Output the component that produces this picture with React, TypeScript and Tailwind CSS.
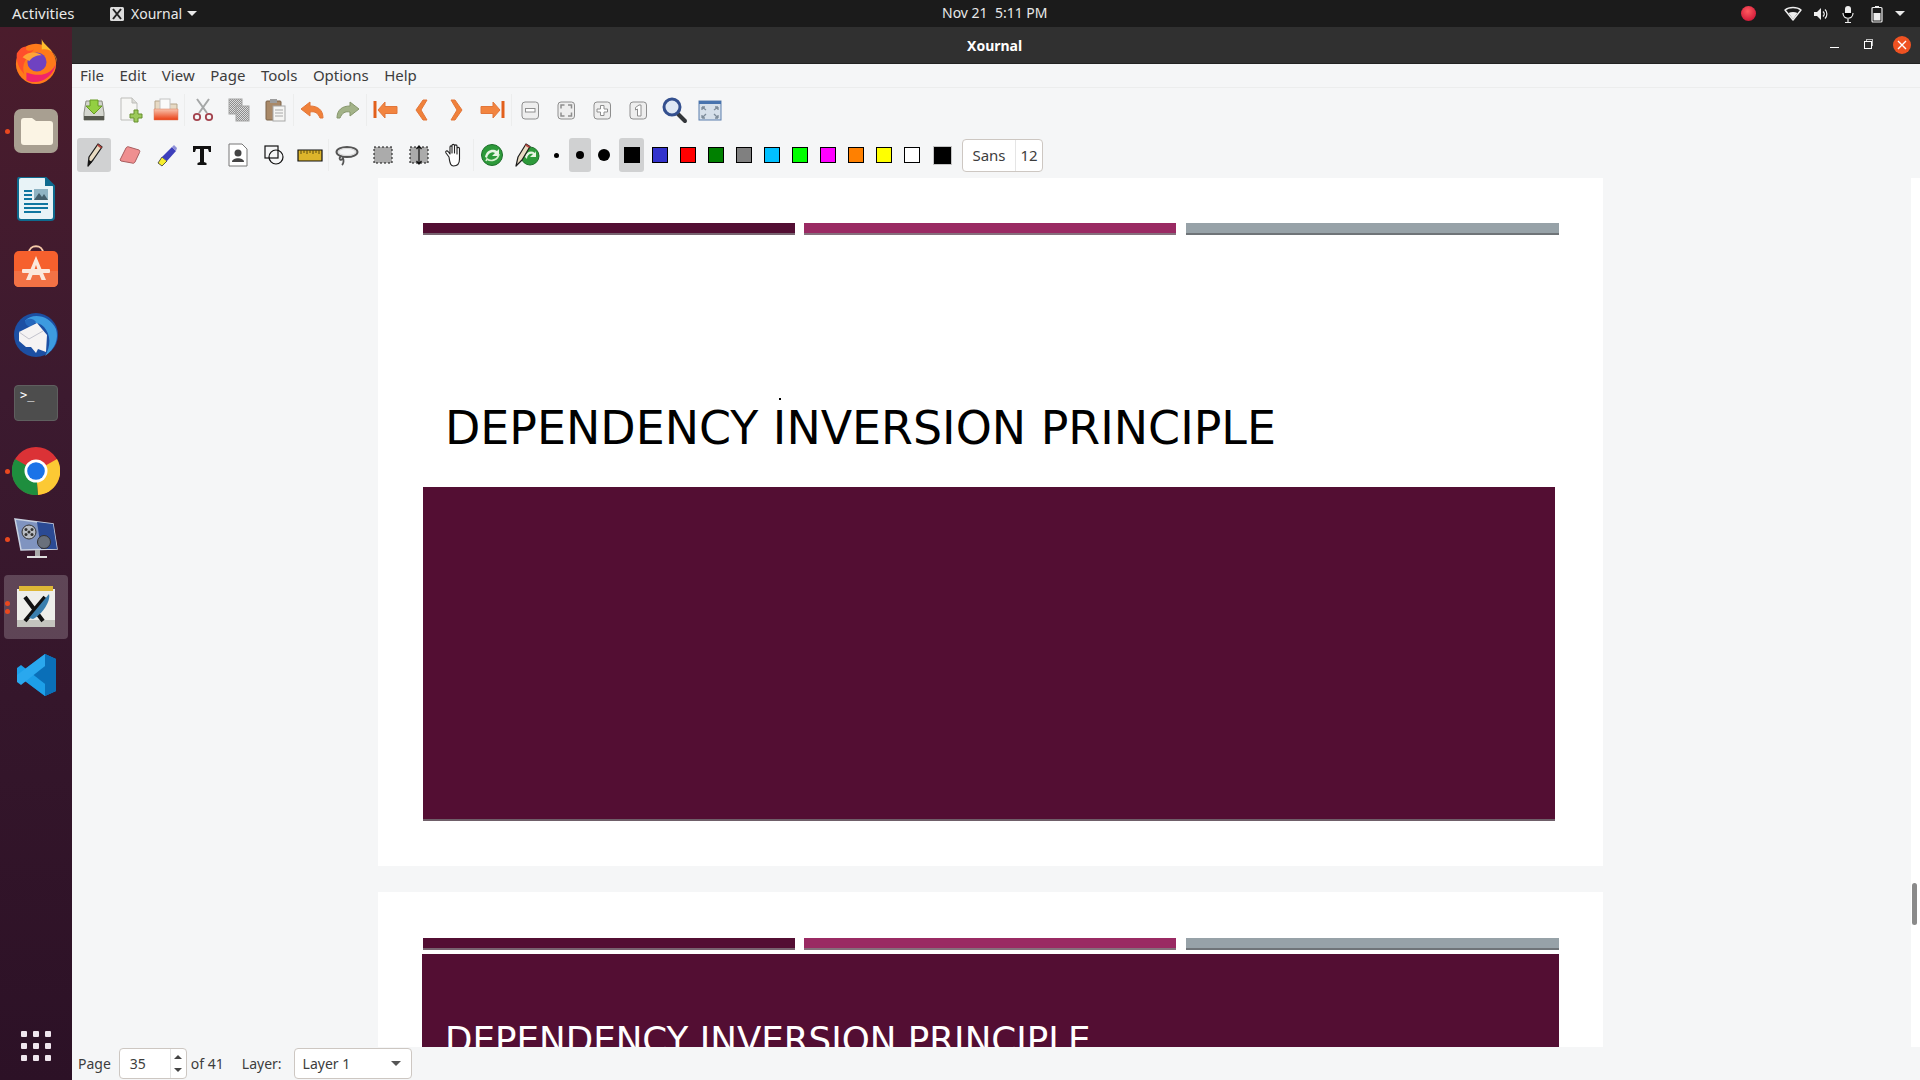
import type { ReactNode } from "react";

const ui = "font-['Noto_Sans','Open_Sans',sans-serif]";

function Icon({ children, size = 28 }: { children: ReactNode; size?: number }) {
  return (
    <svg width={size} height={size} viewBox="0 0 28 28" fill="none">
      {children}
    </svg>
  );
}

function Slot({ children, active, thin }: { children: ReactNode; active?: boolean; thin?: boolean }) {
  return (
    <div className={`h-[34px] flex items-center justify-center shrink-0 ${thin ? "w-[35px]" : "w-9"}`}>
      <div className={`w-[34px] h-[34px] flex items-center justify-center rounded-[3px] ${active ? "bg-[#d0d1d2]" : ""}`}>
        {children}
      </div>
    </div>
  );
}

function Sep() {
  return <div className="w-px h-8 bg-[#eceded] shrink-0" />;
}

// first toolbar
const saveIcon = (
  <Icon>
    <path d="M4 17 L6 5 H22 L24 17 V24 H4 Z" fill="#d4d6cf" stroke="#8a8c82" />
    <rect x="4" y="20" width="20" height="4" fill="#55574f" />
    <path d="M10 4 H18 V10 H22 L14 18 L6 10 H10 Z" fill="#93cf42" stroke="#669a22" />
  </Icon>
);
const newIcon = (
  <Icon>
    <path d="M5 2 H16 L21 7 V24 H5 Z" fill="#f7f7f5" stroke="#bdbdb9" />
    <path d="M16 2 V7 H21" fill="#dcdcd8" stroke="#bdbdb9" />
    <path d="M18 14 H22 V18 H26 V22 H22 V26 H18 V22 H14 V18 H18 Z" fill="#9cc95a" stroke="#668f2e" />
  </Icon>
);
const openIcon = (
  <Icon>
    <defs>
      <linearGradient id="fold" x1="0" y1="0" x2="0" y2="1">
        <stop offset="0" stopColor="#f8c4ae" />
        <stop offset="1" stopColor="#ea3d12" />
      </linearGradient>
    </defs>
    <path d="M3 5 H10 L12 8 H25 V14 H3 Z" fill="#e6d9c4" stroke="#b5a58a" />
    <rect x="8" y="3" width="10" height="11" fill="#fafafa" stroke="#c4c4c4" />
    <path d="M2 13 H26 V24 H2 Z" fill="url(#fold)" stroke="#d9785a" strokeWidth="0.5" />
  </Icon>
);
const cutIcon = (
  <Icon>
    <path d="M8 3 L18 17 M20 3 L10 17" stroke="#a5a7a7" strokeWidth="2" />
    <circle cx="8" cy="21" r="3.2" stroke="#a3434e" strokeWidth="1.8" />
    <circle cx="20" cy="21" r="3.2" stroke="#a3434e" strokeWidth="1.8" />
  </Icon>
);
const copyIcon = (
  <Icon>
    <defs>
      <pattern id="chk" width="2" height="2" patternUnits="userSpaceOnUse">
        <rect width="2" height="2" fill="#dcdcdc" />
        <rect width="1" height="1" fill="#8c8c8c" />
        <rect x="1" y="1" width="1" height="1" fill="#8c8c8c" />
      </pattern>
    </defs>
    <rect x="4" y="3" width="13" height="15" fill="url(#chk)" stroke="#a5a5a5" />
    <rect x="11" y="10" width="13" height="15" fill="url(#chk)" stroke="#a5a5a5" />
  </Icon>
);
const pasteIcon = (
  <Icon>
    <rect x="5" y="5" width="15" height="19" rx="1" fill="#a98968" stroke="#7b6248" />
    <rect x="9" y="3" width="7" height="4" fill="#9d9d9d" />
    <rect x="12" y="10" width="12" height="15" fill="#f5f5f3" stroke="#a8a8a8" />
    <path d="M14 14 H22 M14 17 H22 M14 20 H22" stroke="#a8a8a8" />
  </Icon>
);
const undoIcon = (
  <Icon>
    <path d="M12 6 L3 13 L12 20 V16 C17 15 20 17 22 22 H25 C25 14 20 10 12 10 Z" fill="#f0813a" stroke="#e2763a" strokeLinejoin="round" />
  </Icon>
);
const redoIcon = (
  <Icon>
    <path d="M16 6 L25 13 L16 20 V16 C11 15 8 17 6 22 H3 C3 14 8 10 16 10 Z" fill="#a3b389" stroke="#86966c" strokeLinejoin="round" />
  </Icon>
);
const firstIcon = (
  <Icon>
    <path d="M4 5 V22" stroke="#e2601c" strokeWidth="3" />
    <path d="M7 14 L14 6 V10.5 H26 V17.5 H14 V22 Z" fill="#f2843f" stroke="#e2763a" strokeLinejoin="round" />
  </Icon>
);
const prevIcon = (
  <Icon>
    <path d="M16 4 L9 14 L16 24 H20 L14 14 L20 4 Z" fill="#f0813a" stroke="#e2763a" strokeLinejoin="round" />
  </Icon>
);
const nextIcon = (
  <Icon>
    <path d="M12 4 L19 14 L12 24 H8 L14 14 L8 4 Z" fill="#f0813a" stroke="#e2763a" strokeLinejoin="round" />
  </Icon>
);
const lastIcon = (
  <Icon>
    <path d="M24 5 V22" stroke="#e2601c" strokeWidth="3" />
    <path d="M21 14 L14 6 V10.5 H2 V17.5 H14 V22 Z" fill="#f2843f" stroke="#e2763a" strokeLinejoin="round" />
  </Icon>
);

function ZoomKey({ children }: { children: ReactNode }) {
  return (
    <Icon>
      <rect x="6" y="6" width="16.5" height="17" rx="3" fill="#eeeeee" stroke="#8e8e8e" />
      {children}
    </Icon>
  );
}

const zoomOut = (
  <ZoomKey>
    <rect x="9.5" y="12.5" width="9.5" height="3.5" fill="#fff" stroke="#8e8e8e" />
  </ZoomKey>
);
const zoomFit = (
  <ZoomKey>
    <path d="M9 12.5 V9 H12.5 M16 9 H19.5 V12.5 M19.5 16.5 V20 H16 M12.5 20 H9 V16.5" stroke="#8e8e8e" strokeWidth="1.5" />
  </ZoomKey>
);
const zoomIn = (
  <ZoomKey>
    <path d="M12.5 9.5 H16 V13 H19.5 V16 H16 V19.5 H12.5 V16 H9 V13 H12.5 Z" fill="#fff" stroke="#8e8e8e" />
  </ZoomKey>
);
const zoomOne = (
  <ZoomKey>
    <path d="M11.5 11.5 L15 9 H17 V20 H13.5 V13 L11.5 14 Z" fill="#fff" stroke="#8e8e8e" />
  </ZoomKey>
);
const searchIcon = (
  <Icon>
    <path d="M17 17 L25 25" stroke="#33363a" strokeWidth="4" strokeLinecap="round" />
    <circle cx="12" cy="11" r="8" fill="#dfe8f4" stroke="#34508f" strokeWidth="3" />
  </Icon>
);
const fullscreenIcon = (
  <Icon>
    <rect x="3" y="5" width="22" height="19" fill="#d6e0ea" stroke="#5c7fae" />
    <rect x="3" y="5" width="22" height="3" fill="#4773ae" />
    <path d="M6 11 L10 14 M6 11 H9 M6 11 V14 M22 11 L18 14 M22 11 H19 M22 11 V14 M6 22 L10 18 M6 22 H9 M6 22 V19 M22 22 L18 18 M22 22 H19 M22 22 V19" stroke="#7d8c9a" strokeWidth="1.3" />
  </Icon>
);

// second toolbar
const penIcon = (
  <Icon>
    <path d="M8 25 L9 16 L18 3 L22 6 L13 19 Z" fill="#e9dcc3" stroke="#1c1c1c" strokeWidth="1.3" strokeLinejoin="round" />
    <path d="M17 4.5 L18 3 L22 6 L21 7.5 Z" fill="#b5463f" />
    <path d="M8 25 L9 19 L12 21 Z" fill="#111" />
  </Icon>
);
const eraserIcon = (
  <Icon>
    <path d="M4 19 L10 7 C11 5.5 12 5.5 13 6 L23 9 C24 9.5 24 10.5 23.5 11.5 L19 21 C18 22.5 17 22.5 16 22 L5 20 Z" fill="#ef8f90" stroke="#a85d5f" strokeLinejoin="round" />
  </Icon>
);
const highlighterIcon = (
  <Icon>
    <path d="M6 22 L10 16 L15 20 L10 25 Z" fill="#f6ee2d" stroke="#333" strokeWidth="0.8" />
    <path d="M10 16 L20 6 L24 10 L15 20 Z" fill="#3d3fbb" />
    <path d="M20 6 L22 4 L25 7 L24 10 Z" fill="#8d8fd8" />
  </Icon>
);
const textIcon = (
  <Icon>
    <path d="M5 5 H23 V11 H21 L20 8 H16 V21 L18.5 22 V24 H9.5 V22 L12 21 V8 H8 L7 11 H5 Z" fill="#111" />
  </Icon>
);
const imageIcon = (
  <Icon>
    <path d="M5 3 H18 L23 8 V25 H5 Z" fill="#fff" stroke="#777" strokeLinejoin="round" />
    <circle cx="14" cy="12" r="3.5" fill="#444" />
    <path d="M8 21 C8 16 20 16 20 21 Z" fill="#444" />
  </Icon>
);
const shapesIcon = (
  <Icon>
    <rect x="5" y="5" width="13" height="12" stroke="#111" strokeWidth="1.2" />
    <circle cx="16" cy="16" r="7" stroke="#111" strokeWidth="1.2" />
  </Icon>
);
const rulerIcon = (
  <Icon>
    <path d="M2 9 H26 V20 H2 Z" fill="#dcb42b" stroke="#111" strokeWidth="1.2" />
    <path d="M5 9 V13 M8 9 V12 M11 9 V13 M14 9 V12 M17 9 V13 M20 9 V12 M23 9 V13" stroke="#5a4a12" />
  </Icon>
);
const lassoIcon = (
  <Icon>
    <ellipse cx="14" cy="11" rx="10.5" ry="5" stroke="#555" strokeWidth="2" />
    <ellipse cx="14" cy="11" rx="8.5" ry="3.5" stroke="#d5d5d5" />
    <path d="M8 15 C5 18 8 21 10 17 C11 20 10 23 9 24" stroke="#555" strokeWidth="1.8" />
  </Icon>
);
const selectRectIcon = (
  <Icon>
    <rect x="5" y="6" width="18" height="16" fill="#ababab" stroke="#111" strokeDasharray="2 2" />
  </Icon>
);
const vspaceIcon = (
  <Icon>
    <rect x="5" y="6" width="18" height="16" fill="#ababab" stroke="#111" strokeDasharray="2 2" />
    <path d="M14 5 V23 M11.5 8 L14 5 L16.5 8 M11.5 20 L14 23 L16.5 20" stroke="#111" strokeWidth="1.2" />
  </Icon>
);
const handIcon = (
  <Icon>
    <path d="M8 16 L5 12 C4 10 6 9 7.5 11 L9 13 V6 C9 4.5 11 4.5 11 6 V12 V4.5 C11 3 13.5 3 13.5 4.5 V12 V5 C13.5 3.5 16 3.5 16 5 V13 V7.5 C16 6 18.5 6 18.5 7.5 V18 C18.5 23 15.5 25 12.5 25 C10 25 9 23.5 8 16 Z" fill="#fff" stroke="#222" strokeWidth="1.1" strokeLinejoin="round" />
  </Icon>
);
const refreshGreen = (
  <Icon>
    <circle cx="14" cy="14" r="10.5" fill="#2d9a3a" stroke="#1e6f2b" />
    <path d="M7 16 C8 9 15 7 19 10 L21 8 V15 H14 L17 12 C14 10 10 12 9 17 Z" fill="#e8f5e4" />
    <path d="M21 13 C20 19 13 21 9 18 L8 20" stroke="#d7efd0" strokeWidth="1.6" />
  </Icon>
);
const penRefresh = (
  <Icon>
    <circle cx="17" cy="15" r="9" fill="#2d9a3a" stroke="#1e6f2b" />
    <path d="M12 16 C13 11 18 9 22 12 L23 10 V16 H17 L20 13 C17 12 14 14 14 18 Z" fill="#e8f5e4" />
    <path d="M3 25 L5 16 L13 3 L17 5.5 L9 19 Z" fill="#e9dcc3" stroke="#1c1c1c" strokeWidth="1.2" strokeLinejoin="round" />
    <path d="M12 4.5 L13 3 L17 5.5 L16 7 Z" fill="#b5463f" />
  </Icon>
);

const colours = ["bg-[#3333cc]", "bg-[#ff0000]", "bg-[#008000]", "bg-[#808080]", "bg-[#00c0ff]", "bg-[#00ff00]", "bg-[#ff00ff]", "bg-[#ff8000]", "bg-[#ffff00]", "bg-white"];

function Caret({ className }: { className?: string }) {
  return <div className={`w-0 h-0 border-x-[5px] border-x-transparent border-t-[5px] border-t-[#e9e9e9] ${className ?? ""}`} />;
}

function TopBar() {
  return (
    <div className="h-[27px] bg-[#1b1b1b] text-[#e9e9e9] text-[14px] flex items-center relative shrink-0">
      <span className="ml-3 w-[98px] text-[15px]">Activities</span>
      <svg width="14" height="14" viewBox="0 0 14 14">
        <rect width="14" height="14" rx="1.5" fill="#dddddd" />
        <path d="M3 2 L11 12 M11 2 L3 12" stroke="#222" strokeWidth="2" />
      </svg>
      <span className="ml-[7px]">Xournal</span>
      <Caret className="ml-[5px]" />
      <span className="absolute left-[942px] top-[2px] text-[14px]">Nov 21&nbsp;&nbsp;5:11 PM</span>
      <div className="ml-auto flex items-center">
        <div className="w-[15px] h-[15px] rounded-full bg-[radial-gradient(circle_at_45%_35%,#ff5a5f,#d61f3c_70%,#a01030)]" />
        <svg width="20" height="20" viewBox="0 0 20 20" className="ml-[27px]">
          <path d="M2 6 C6 2.5 14 2.5 18 6 L10 16 Z" fill="#1b1b1b" stroke="#eee" strokeWidth="1.5" strokeLinejoin="round" />
          <path d="M5.5 9 C8 7.5 12 7.5 14.5 9 L10 15 Z" fill="#eee" />
        </svg>
        <svg width="18" height="18" viewBox="0 0 18 18" className="ml-[9px]">
          <path d="M2 7 H5 L9 3 V15 L5 11 H2 Z" fill="#eee" />
          <path d="M11 6.5 C12.5 8 12.5 10 11 11.5 M13 4.5 C15.5 7 15.5 11 13 13.5" stroke="#eee" strokeWidth="1.2" />
        </svg>
        <svg width="16" height="20" viewBox="0 0 16 20" className="ml-[10px]">
          <rect x="5" y="2" width="6" height="11" rx="3" fill="#eee" />
          <path d="M3 9 C3 16 13 16 13 9 M8 15 V18 M5 18.5 H11" stroke="#eee" strokeWidth="1.2" />
        </svg>
        <svg width="12" height="18" viewBox="0 0 12 18" className="ml-[15px]">
          <rect x="4" y="1" width="4" height="2" fill="#eee" />
          <rect x="1" y="2.5" width="10" height="14.5" rx="1" fill="none" stroke="#eee" strokeWidth="1.2" />
          <rect x="2.5" y="8" width="7" height="7.5" fill="#eee" />
        </svg>
        <Caret className="ml-[12px] mr-[15px]" />
      </div>
    </div>
  );
}

function DockItem({ children, dots = 0, active }: { children: ReactNode; dots?: number; active?: boolean }) {
  return (
    <div className="relative h-[68px] flex items-center justify-center">
      {active && <div className="absolute left-1 right-1 top-[2px] bottom-[2px] rounded-[4px] bg-white/20" />}
      <div className="absolute left-[5px] flex flex-col gap-[3px]">
        {Array.from({ length: dots }).map((_, i) => (
          <div key={i} className="w-[5px] h-[5px] rounded-full bg-[#e9481f]" />
        ))}
      </div>
      <div className="relative">{children}</div>
    </div>
  );
}

function Dock() {
  return (
    <div className="w-[72px] shrink-0 flex flex-col bg-[linear-gradient(180deg,#4b1c2c_0%,#3c1a2f_35%,#2c1126_100%)]">
      <div className="mb-[2px]">
        <DockItem>
          <svg width="46" height="48" viewBox="0 0 48 48">
            <circle cx="24" cy="27" r="21" fill="#ff7a1a" />
            <path d="M30 1 C32 8 44 12 46 26 C46 16 38 10 30 12 Z" fill="#ffbd2e" />
            <path d="M4 16 C8 10 12 8 14 10 C12 14 18 14 22 12 C14 20 8 28 12 38 C6 32 3 24 4 16 Z" fill="#ff4f2b" />
            <circle cx="25" cy="25" r="10" fill="#6f42c1" />
            <path d="M10 20 C16 14 24 14 30 18 C24 18 20 20 17 24 Z" fill="#ffa436" />
            <path d="M14 44 C26 50 42 42 45 26 C42 36 30 42 14 36 Z" fill="#f0246b" />
          </svg>
        </DockItem>
      </div>
      <DockItem dots={1}>
        <div className="w-11 h-11 rounded-[7px] bg-[#a89f91] flex items-center justify-center">
          <svg width="33" height="28" viewBox="0 0 33 28">
            <path d="M1 4 C1 2 2 1 4 1 H12 L16 4 H30 C32 4 33 5 33 7 V25 C33 27 32 28 30 28 H4 C2 28 1 27 1 25 Z" fill="#fbf4e4" />
          </svg>
        </div>
      </DockItem>
      <DockItem>
        <svg width="38" height="44" viewBox="0 0 38 44">
          <path d="M1 3 C1 1 2 0 4 0 H28 L37 9 V40 C37 42 36 43 34 43 H4 C2 43 1 42 1 40 Z" fill="#e8f3f7" stroke="#0e6a8e" strokeWidth="2" />
          <path d="M28 0 L37 9 H28 Z" fill="#0e6a8e" />
          <path d="M7 14 H15 M7 18 H15 M7 22 H15 M7 27 H31 M7 31 H31 M7 35 H24" stroke="#0e76a0" strokeWidth="2" />
          <rect x="17" y="12" width="14" height="11" fill="#8fb4c4" />
          <path d="M17 23 L22 16 L25 20 L27 17 L31 23 Z" fill="#44606d" />
        </svg>
      </DockItem>
      <DockItem>
        <svg width="44" height="44" viewBox="0 0 44 44">
          <path d="M15 8 C15 -1 29 -1 29 8" stroke="#f6c9a8" strokeWidth="2" fill="none" />
          <rect x="0" y="6" width="44" height="36" rx="5" fill="#f6602d" />
          <path d="M0 26 H44 V37 C44 40 42 42 39 42 H5 C2 42 0 40 0 37 Z" fill="#f27245" />
          <path d="M22 11 L32 35 H27.5 L25.5 30 H18.5 L16.5 35 H12 L22 11 Z M22 20 L20 26 H24 Z" fill="#fbe8dc" fillRule="evenodd" />
          <rect x="8" y="24" width="28" height="4" rx="1" fill="#fbe8dc" />
        </svg>
      </DockItem>
      <DockItem>
        <svg width="48" height="48" viewBox="0 0 48 48">
          <circle cx="24" cy="24" r="22" fill="#1c4fa3" />
          <path d="M13 10 C20 1 38 4 44 18 C47 28 43 38 33 45 C39 35 39 24 32 16 C26 10 18 12 13 10 Z" fill="#3d9be0" />
          <path d="M13 10 C16 7 21 7 24 11 L18 16 C15 15 13 13 13 10 Z" fill="#2568bd" />
          <path d="M7 21 L25 12 L35 24 L34 41 L26 38 L24 42 L19 36 L14 36 L7 30 Z" fill="#f5f3f3" />
          <path d="M7 21 L17 28 L31 20" stroke="#c3c3cd" strokeWidth="1" fill="none" />
        </svg>
      </DockItem>
      <DockItem>
        <div className="w-11 h-9 rounded-[4px] bg-[#4d4d4d] border border-[#5f5f5f] relative">
          <span className="absolute left-[5px] top-[2px] text-[12px] leading-[14px] text-white font-['DejaVu_Sans_Mono',monospace]">&gt;_</span>
        </div>
      </DockItem>
      <DockItem dots={1}>
        <svg width="48" height="48" viewBox="0 0 48 48">
          <circle cx="24" cy="24" r="24" fill="#db3236" />
          <path d="M24 24 L45 12 A24 24 0 0 1 26 48 Z" fill="#fcc934" />
          <path d="M24 24 L26 48 A24 24 0 0 1 3 12 Z" fill="#1e8e3e" />
          <circle cx="24" cy="24" r="11.5" fill="#fff" />
          <circle cx="24" cy="24" r="8.8" fill="#1a73e8" />
        </svg>
      </DockItem>
      <DockItem dots={1}>
        <svg width="46" height="46" viewBox="0 0 46 46">
          <path d="M2 3 L40 8 L44 33 L8 34 Z" fill="#8094c0" stroke="#c9d2e2" strokeWidth="1.5" />
          <path d="M24 6 L40 8 L44 33 L28 33 Z" fill="#2b4a94" />
          <circle cx="16" cy="16" r="7" fill="#b9bdc4" stroke="#333" />
          <circle cx="16" cy="16" r="1.5" fill="#333" />
          <circle cx="13" cy="13.5" r="1.5" fill="#333" />
          <circle cx="19" cy="13.5" r="1.5" fill="#333" />
          <circle cx="13" cy="18.5" r="1.5" fill="#333" />
          <circle cx="19" cy="18.5" r="1.5" fill="#333" />
          <circle cx="31" cy="26" r="6.5" fill="#69707c" stroke="#333" />
          <rect x="22" y="34" width="5" height="6" fill="#aaa" />
          <rect x="14" y="40" width="20" height="2" fill="#ddd" />
        </svg>
      </DockItem>
      <DockItem dots={2} active>
        <svg width="40" height="42" viewBox="0 0 40 42">
          <rect x="1" y="3" width="38" height="38" fill="#eeeeea" />
          <path d="M1 34 H39 V41 H1 Z" fill="#c4c4be" />
          <rect x="3" y="0" width="34" height="5" fill="#ddb736" />
          <path d="M9 11 L27 35 M29 11 L9 35" stroke="#111" strokeWidth="4" />
          <path d="M13 32 L33 8 C35 14 27 28 17 33 Z" fill="#3a7fae" />
        </svg>
      </DockItem>
      <DockItem>
        <svg width="44" height="44" viewBox="0 0 44 44">
          <path d="M31 1 L42 6 V38 L31 43 L3 22 Z" fill="#0f8fdc" />
          <path d="M31 1 L42 6 V38 L31 43 V31 L17 22 L31 13 Z" fill="#0a6fb8" />
          <path d="M3 15 L7 12 L31 31 V43 L3 22 Z" fill="#1d9fe8" />
          <path d="M3 29 L7 32 L31 13 V1 L3 22 Z" fill="#2aa8ee" />
        </svg>
      </DockItem>
      <div className="mt-auto mb-[19px] self-center grid grid-cols-3 gap-[6px]">
        {Array.from({ length: 9 }).map((_, i) => (
          <div key={i} className="w-[6px] h-[6px] rounded-[1px] bg-[#f0e6ee]" />
        ))}
      </div>
    </div>
  );
}

function SlideBars({ top }: { top: string }) {
  return (
    <div className={`flex ml-[45px] ${top}`}>
      <div className="w-[372px] h-3 bg-[#530e33] border-b-2 border-[#77636f]" />
      <div className="ml-[9px] w-[372px] h-3 bg-[#9a2a63] border-b-2 border-[#85707c]" />
      <div className="ml-[10px] w-[373px] h-3 bg-[#97a2a8] border-b-2 border-[#6f7478]" />
    </div>
  );
}

function Xournal() {
  return (
    <div className="flex-1 flex flex-col min-w-0 bg-[#f5f6f7]">
      <div className="h-[37px] bg-[#303030] border-b border-[#222] shrink-0 flex items-center relative text-white text-[14px] font-bold">
        <span className="absolute left-[895px] top-[8px]">Xournal</span>
        <div className="ml-auto flex items-center mr-[9px]">
          <div className="w-[9px] h-px bg-white mt-[4px]" />
          <div className="ml-[25px] w-[8px] h-[8px] relative">
            <div className="absolute left-[2px] -top-[2px] w-[7px] h-[7px] border border-[#bbb]" />
            <div className="absolute inset-0 border border-white bg-[#303030]" />
          </div>
          <div className="ml-[21px] w-[18px] h-[18px] rounded-full bg-[#ef5222] flex items-center justify-center">
            <svg width="10" height="10" viewBox="0 0 10 10">
              <path d="M1 1 L9 9 M9 1 L1 9" stroke="#fff" strokeWidth="1.4" />
            </svg>
          </div>
        </div>
      </div>
      <div className="h-6 shrink-0 flex items-center pl-[8px] gap-[15.5px] text-[15px] text-[#3d3d3d] border-b border-[#eceded]">
        {["File", "Edit", "View", "Page", "Tools", "Options", "Help"].map((m) => (
          <span key={m}>{m}</span>
        ))}
      </div>
      <div className="h-11 shrink-0 flex items-center pl-1">
        <Slot>{saveIcon}</Slot>
        <Slot>{newIcon}</Slot>
        <Slot>{openIcon}</Slot>
        <Sep />
        <Slot>{cutIcon}</Slot>
        <Slot>{copyIcon}</Slot>
        <Slot>{pasteIcon}</Slot>
        <Sep />
        <Slot>{undoIcon}</Slot>
        <Slot>{redoIcon}</Slot>
        <Sep />
        <Slot>{firstIcon}</Slot>
        <Slot>{prevIcon}</Slot>
        <Slot>{nextIcon}</Slot>
        <Slot>{lastIcon}</Slot>
        <Sep />
        <Slot>{zoomOut}</Slot>
        <Slot>{zoomFit}</Slot>
        <Slot>{zoomIn}</Slot>
        <Slot>{zoomOne}</Slot>
        <Slot>{searchIcon}</Slot>
        <Slot>{fullscreenIcon}</Slot>
      </div>
      <div className="h-[46px] shrink-0 flex items-center pl-1">
        <Slot active>{penIcon}</Slot>
        <Slot>{eraserIcon}</Slot>
        <Slot>{highlighterIcon}</Slot>
        <Slot>{textIcon}</Slot>
        <Slot>{imageIcon}</Slot>
        <Slot>{shapesIcon}</Slot>
        <Slot>{rulerIcon}</Slot>
        <Sep />
        <Slot>{lassoIcon}</Slot>
        <Slot>{selectRectIcon}</Slot>
        <Slot>{vspaceIcon}</Slot>
        <Slot>{handIcon}</Slot>
        <Sep />
        <Slot thin>{refreshGreen}</Slot>
        <Slot thin>{penRefresh}</Slot>
        <div className="w-[25px] h-[34px] flex items-center justify-center">
          <div className="w-[5px] h-[5px] rounded-full bg-black" />
        </div>
        <div className="w-[22px] h-[34px] rounded-[3px] bg-[#d0d1d2] flex items-center justify-center">
          <div className="w-2 h-2 rounded-full bg-black" />
        </div>
        <div className="w-7 h-[34px] pr-[3px] flex items-center justify-center">
          <div className="w-3 h-3 rounded-full bg-black" />
        </div>
        <div className="w-[25px] h-[34px] rounded-[3px] bg-[#d0d1d2] flex items-center justify-center">
          <div className="w-4 h-4 bg-black" />
        </div>
        <div className="ml-[8px] flex gap-3">
          {colours.map((c) => (
            <div key={c} className={`w-4 h-4 border border-black shrink-0 ${c}`} />
          ))}
        </div>
        <div className="ml-[13px] w-[19px] h-[19px] bg-black border border-[#c4c4c4] shrink-0" />
        <div className="ml-[10px] w-[81px] h-[33px] bg-white border border-[#cdc7c2] rounded-[4px] flex items-center text-[15px] text-[#3d3d3d] shrink-0">
          <span className="w-[52px] text-center">Sans</span>
          <div className="w-px h-full bg-[#e5e5e5]" />
          <span className="flex-1 text-center">12</span>
        </div>
      </div>
      <div className="flex-1 min-h-0 overflow-hidden relative pl-[306px] font-['DejaVu_Sans',sans-serif]">
        <div className="w-[1225px] h-[688px] bg-white flex flex-col">
          <SlideBars top="mt-[45px]" />
          <div className="relative mt-[166px] ml-[67px] text-[45.9px] leading-[54px] text-black whitespace-nowrap">
            DEPENDENCY INVERSION PRINCIPLE
            <div className="absolute left-[334px] -top-[3px] w-[2px] h-[2px] bg-black" />
          </div>
          <div className="ml-[45px] mt-[32px] w-[1132px] h-[334px] bg-[#530e33] border-b-2 border-[#6f5f69]" />
        </div>
        <div className="w-[1225px] h-[300px] bg-white mt-[26px] flex flex-col">
          <SlideBars top="mt-[46px]" />
          <div className="ml-[44px] mt-[4px] w-[1137px] h-[200px] bg-[#530e33] pl-[23px] pt-[65px] text-[35.66px] leading-[42px] text-white whitespace-nowrap">
            DEPENDENCY INVERSION PRINCIPLE
          </div>
        </div>
        <div className="absolute right-0 top-0 bottom-0 w-[9px] bg-white" />
        <div className="absolute right-[3px] top-[705px] w-[5px] h-[42px] rounded-full bg-[#8a8a8a]" />
      </div>
      <div className="h-[33px] shrink-0 flex items-center text-[14px] text-[#3d3d3d]">
        <span className="ml-[6px]">Page</span>
        <div className="ml-2 w-[68px] h-[31px] bg-white border border-[#cdc7c2] rounded-[4px] flex items-center">
          <span className="ml-[10px]">35</span>
          <div className="ml-auto w-4 h-full border-l border-[#e5e5e5] flex flex-col items-center justify-center gap-[9px]">
            <div className="w-0 h-0 border-x-[4px] border-x-transparent border-b-[4px] border-b-[#444]" />
            <div className="w-0 h-0 border-x-[4px] border-x-transparent border-t-[4px] border-t-[#444]" />
          </div>
        </div>
        <span className="ml-[4px]">of 41</span>
        <span className="ml-[18px]">Layer:</span>
        <div className="ml-[12px] w-[118px] h-[31px] bg-white border border-[#cdc7c2] rounded-[4px] flex items-center">
          <span className="ml-2">Layer 1</span>
          <div className="ml-auto mr-[10px] w-0 h-0 border-x-[5px] border-x-transparent border-t-[5px] border-t-[#555]" />
        </div>
      </div>
    </div>
  );
}

export default function App() {
  return (
    <div className={`w-[1920px] h-[1080px] flex flex-col overflow-hidden ${ui}`}>
      <TopBar />
      <div className="flex-1 flex min-h-0">
        <Dock />
        <Xournal />
      </div>
    </div>
  );
}
